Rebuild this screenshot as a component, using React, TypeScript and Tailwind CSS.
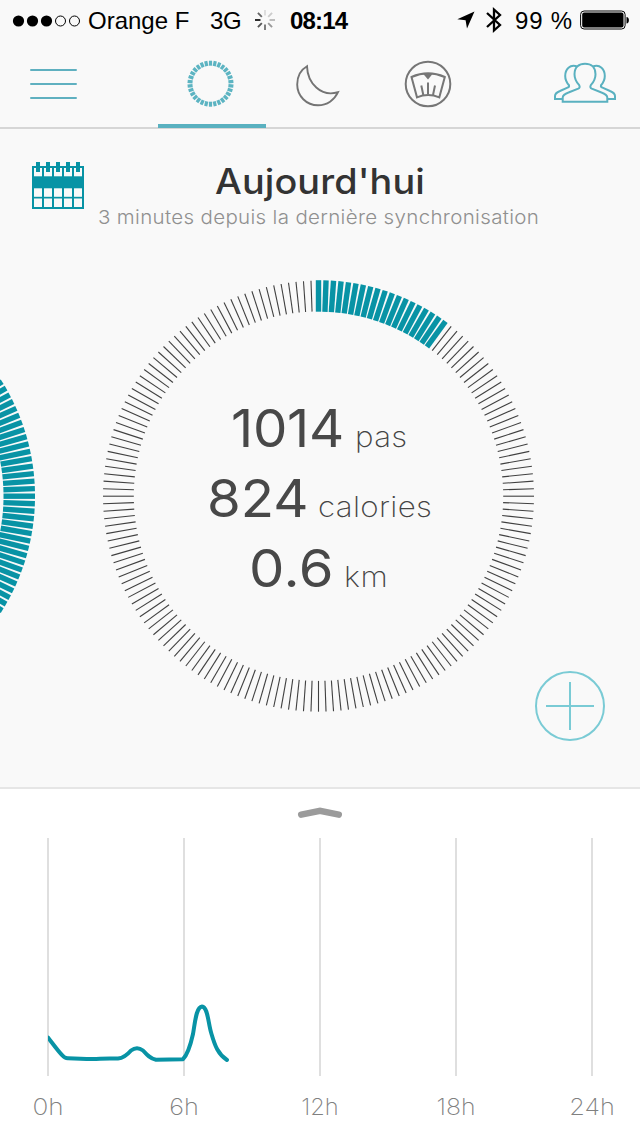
import React from "react";

const TEAL = "#0893a5";

function polar(cx: number, cy: number, r: number, deg: number) {
  const a = (deg * Math.PI) / 180;
  return { x: cx + r * Math.sin(a), y: cy - r * Math.cos(a) };
}

function Ring({ cx, cy, filled }: { cx: number; cy: number; filled: number }) {
  return (
    <g>
      {Array.from({ length: 180 }, (_, i) => {
        const on = i < filled;
        const a = polar(cx, cy, on ? 216 : 215.5, i * 2);
        const b = polar(cx, cy, on ? 184.5 : 184.7, i * 2);
        return (
          <line
            key={i}
            x1={a.x}
            y1={a.y}
            x2={b.x}
            y2={b.y}
            stroke={on ? TEAL : "#404040"}
            strokeWidth={on ? 5.4 : 1.1}
          />
        );
      })}
    </g>
  );
}

function StatusBar() {
  return (
    <div className="flex h-10 items-center font-['Liberation_Sans',Arial,sans-serif] text-[24px] leading-[40px] text-black">
      <svg className="ml-3 mt-[1px] h-3 w-[69px] shrink-0" viewBox="0 0 69 12">
        <circle cx="6.5" cy="6" r="5.6" />
        <circle cx="20.5" cy="6" r="5.6" />
        <circle cx="34.5" cy="6" r="5.6" />
        <circle cx="48.5" cy="6" r="5" fill="none" stroke="#000" />
        <circle cx="62.5" cy="6" r="5" fill="none" stroke="#000" />
      </svg>
      <span className="ml-[7px] mt-[2px] w-[122px] whitespace-nowrap">Orange F</span>
      <span className="mt-[2px] w-[45px] whitespace-nowrap tracking-[-0.3px]">3G</span>
      <svg className="h-5 w-5 shrink-0" viewBox="-10 -10 20 20">
        {["#ddd", "#ccc", "#bbb", "#999", "#777", "#555", "#222", "#666"].map((c, i) => {
          const a = polar(0, 0, 10, i * 45);
          const b = polar(0, 0, 4.5, i * 45);
          return <line key={i} x1={a.x} y1={a.y} x2={b.x} y2={b.y} stroke={c} strokeWidth="1.9" />;
        })}
      </svg>
      <span className="ml-[15px] mt-[2px] whitespace-nowrap font-bold tracking-[-0.8px]">08:14</span>
      <div className="ml-auto flex items-center">
        <svg className="h-[18px] w-[18px]" viewBox="0 0 18 18">
          <path d="M17.5 .5 10 17.5 8.6 9.2 .3 8.2Z" />
        </svg>
        <svg className="ml-[11px] h-[28px] w-4" viewBox="0 0 16 28" fill="none" stroke="#000" strokeWidth="2.3">
          <path d="M1 7 14 19 8 24.500V3.500L14 9 1 21" />
        </svg>
        <span className="ml-[13px] mt-[2px] whitespace-nowrap tracking-[0.8px]">99 %</span>
        <svg className="ml-[7px] mr-[10px] h-5 w-[50px]" viewBox="0 0 50 20">
          <rect x=".6" y="1" width="44.5" height="18" rx="3.5" fill="none" stroke="#000" />
          <rect x="2.2" y="2.6" width="41.3" height="14.8" rx="2" />
          <path d="M46.500 7c3.2 0 3.2 6.500 0 6.500Z" />
        </svg>
      </div>
    </div>
  );
}

function NavBar() {
  return (
    <nav className="flex h-[89px] border-b-2 border-[#d6d6d6]">
      <button className="flex w-[158px] pl-[30px] pt-7">
        <svg className="h-8 w-[47px]" viewBox="0 0 47 32" stroke="#5fb0c0" strokeWidth="2" strokeLinecap="round">
          <path d="M1 2H46M1 16H46M1 30H46" />
        </svg>
      </button>
      <button className="flex h-[88px] w-[108px] justify-center border-b-4 border-[#5ab1c0] pt-5">
        <svg className="-ml-[2px] h-12 w-12" viewBox="0 0 48 48">
          {Array.from({ length: 30 }, (_, i) => {
            const a = polar(23.5, 23.7, 23, i * 12);
            const b = polar(23.5, 23.7, 18, i * 12);
            return <line key={i} x1={a.x} y1={a.y} x2={b.x} y2={b.y} stroke="#5cb4c2" strokeWidth="3.2" />;
          })}
        </svg>
      </button>
      <button className="flex w-[108px] justify-center pt-6">
        <svg className="-ml-[3px] h-[44px] w-[46px]" viewBox="0 0 46 44" fill="none" stroke="#747474" strokeWidth="1.9">
          <path d="M11 2.2C3.500 6.500 1.200 14 1.200 20.500C1.200 32 10.500 41.300 22 41.300C31 41.300 38.500 36 42 28.200C25 33.500 11.500 19 11 2.200Z" />
        </svg>
      </button>
      <button className="flex w-[108px] justify-center pt-5">
        <svg className="-ml-[1px] h-12 w-12" viewBox="0 0 48 48" fill="none" stroke="#767676" strokeWidth="2">
          <circle cx="24" cy="24" r="22.3" />
          <path d="M7.5 17Q24 9.7 40.8 17L35.3 37.3Q24 32.5 13 37.3Z" />
          <path d="M17.3 25.5 19.3 35M24 22.5V34M31 25.5 29 35" />
          <path d="M19.3 14H28.5L24 19.5Z" fill="#767676" stroke="none" />
        </svg>
      </button>
      <button className="ml-auto flex pr-6 pt-[22px]">
        <svg className="h-[42px] w-[62px]" viewBox="0 0 62 42" fill="none" stroke="#5ab1c0" strokeWidth="2">
          <path d="M8.7 39.8V35.5Q9 32.5 14.5 30.5L24.2 26.7Q26.500 25.4 25.2 23.2C22.5 20.2 20.5 16.3 20.5 12.2C20.5 5 25 1.8 31 1.8S41.5 5 41.5 12.2C41.5 16.3 39.5 20.2 36.8 23.2Q35.500 25.4 37.8 26.7L47.5 30.5Q53 32.5 53.3 35.5V39.8Z" />
          <path d="M23.2 4.5C16 2 11.2 7 11.2 14C11.2 17.5 12.5 20.5 15 23.2Q15.5 24.8 13.5 25.7L6 29Q1 31 1 34V37H8M38.8 4.5C46 2 50.8 7 50.8 14C50.8 17.5 49.5 20.5 47 23.2Q46.5 24.8 48.5 25.7L56 29Q61 31 61 34V37H54" />
        </svg>
      </button>
    </nav>
  );
}

function Calendar() {
  return (
    <svg className="h-[47px] w-[52px] shrink-0" viewBox="0 0 52 47">
      <rect x="0" y="4" width="52" height="43" fill={TEAL} />
      {[0, 1, 2, 3, 4].map((i) => (
        <g key={i} fill="#f9f9f9">
          <rect x={2 + i * 10} y="6" width="8" height="8.3" />
          <rect x={2 + i * 10} y="26.3" width="8" height="8.5" />
          <rect x={2 + i * 10} y="36.5" width="8" height="8.5" />
          <rect x={4 + i * 10} y="0" width="4" height="10" fill={TEAL} />
        </g>
      ))}
    </svg>
  );
}

function Stat({ value, unit, className, unitClass }: { value: string; unit: string; className: string; unitClass: string }) {
  return (
    <div className="flex h-[70px] items-baseline whitespace-nowrap leading-[70px]">
      <span className={"origin-left text-[52px] font-normal text-[#484848] " + className}>{value}</span>
      <span className={"origin-left scale-x-[1.1] text-[28.5px] font-extralight text-[#444] " + unitClass}>{unit}</span>
    </div>
  );
}

export default function App() {
  return (
    <div className="flex h-[1136px] w-[640px] flex-col overflow-hidden bg-[#f9f9f9] font-[Inter,sans-serif]">
      <StatusBar />
      <NavBar />
      <header className="flex h-[111px] pl-8 pt-[33px]">
        <Calendar />
        <div className="ml-[14px] flex flex-col">
          <h1 className="ml-[117px] h-[42px] origin-left scale-x-[1.08] whitespace-nowrap text-[35px] font-medium leading-[39px] tracking-[0.1px] text-[#333]">Aujourd'hui</h1>
          <p className="origin-left scale-x-[1.08] whitespace-nowrap text-[19px] font-light leading-[28px] tracking-[0.3px] text-[#909090]">3 minutes depuis la dernière synchronisation</p>
        </div>
      </header>
      <main className="relative grid h-[547px] shrink-0">
        <svg className="col-start-1 row-start-1 h-[547px] w-[640px]" viewBox="0 240 640 547">
          <Ring cx={-181} cy={496.2} filled={180} />
          <Ring cx={318.5} cy={496.2} filled={19} />
        </svg>
        <div className="col-start-1 row-start-1 flex flex-col pt-[154px]">
          <Stat value="1014" unit="pas" className="ml-[231px] w-[124px] scale-x-[1.05] tracking-[-0.3px]" unitClass="tracking-[0.3px]" />
          <Stat value="824" unit="calories" className="ml-[207px] w-[111px] scale-x-[1.05]" unitClass="tracking-[0.3px]" />
          <Stat value="0.6" unit="km" className="ml-[249px] w-[95px] scale-x-[1.08] tracking-[0.5px]" unitClass="tracking-[0.5px]" />
        </div>
        <button className="absolute bottom-[46px] right-[35px]">
          <svg className="h-[70px] w-[70px]" viewBox="0 0 70 70" fill="none" stroke="#7acbd5" strokeWidth="2">
            <circle cx="35" cy="35" r="34" />
            <path d="M11 35H59M35 11V59" />
          </svg>
        </button>
      </main>
      <section className="flex h-[349px] shrink-0 flex-col border-t-2 border-[#e6e6e6] bg-white">
        <svg className="h-[300px] w-[640px] shrink-0" viewBox="0 789 640 300" fill="none">
          <path d="M301.2 814.6 320 810.8 338.8 814.6" stroke="#9b9b9b" strokeWidth="6.5" strokeLinecap="round" />
          <path d="M48 838V1076M184 838V1076M320 838V1076M456 838V1076M592 838V1076" stroke="#dfdfdf" strokeWidth="2" />
          <clipPath id="plot">
            <rect x="48" y="838" width="544" height="238" />
          </clipPath>
          <path
            clipPath="url(#plot)"
            d="M48 1037.5C53 1044 58 1051 62 1055Q65 1058.5 68 1058.3C80 1058.3 88 1059.5 100 1058.7C108 1058.2 113 1058.5 118 1058.5C124 1058 128 1054 131 1050.500Q137 1046 143 1050.500C147 1055 150 1058.5 156 1059.8L183 1059.2C187 1055 191 1043 193 1034C195 1023 196 1007 202 1006.5C208 1007 208 1023 211.500 1034C215 1046 218 1054 227 1060"
            stroke={TEAL}
            strokeWidth="4"
            strokeLinecap="round"
            strokeLinejoin="round"
          />
        </svg>
        <div className="-mt-[2px] grid grid-cols-[96px_176px_96px_176px_96px] text-center text-[23px] font-extralight leading-[40px] text-[#808080]">
          <span className="scale-x-[1.14]">0h</span>
          <span className="scale-x-[1.1]">6h</span>
          <span className="scale-x-[1.03]">12h</span>
          <span className="scale-x-[1.08]">18h</span>
          <span className="scale-x-[1.1]">24h</span>
        </div>
      </section>
    </div>
  );
}
